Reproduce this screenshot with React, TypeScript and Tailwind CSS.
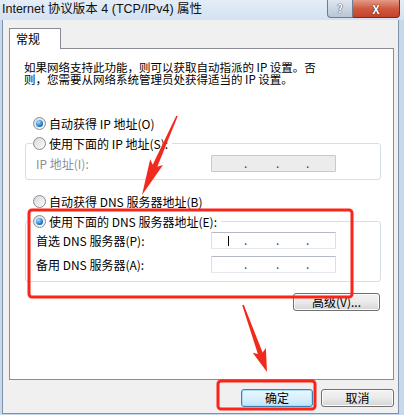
import React from 'react';

function Radio({ checked = false }: { checked?: boolean }) {
  return (
    <span className="w-[13px] h-[13px] rounded-full border border-[#8b8d90] bg-gradient-to-br from-[#d6d8db] to-[#fbfbfb] flex items-center justify-center shrink-0">
      {checked && (
        <span className="w-[7px] h-[7px] rounded-full bg-[radial-gradient(circle_at_35%_30%,#a8e2ff,#2a86d6_55%,#0d3d80)]" />
      )}
    </span>
  );
}

function IpBox({ disabled = false, cursor = false }: { disabled?: boolean; cursor?: boolean }) {
  return (
    <div
      className={
        'relative w-[125px] h-[17px] border rounded-[1px] ' +
        (disabled
          ? 'bg-[#ececec] border-[#c9c9c9]'
          : 'bg-white border-[#b5bbc4] border-b-[#e3e9ef] border-x-[#dbdfe6]')
      }
    >
      {cursor && <span className="absolute left-[16px] top-[3px] w-[1px] h-[10px] bg-black" />}
      <span className="absolute left-[32px] top-[1px] text-[12px] leading-[12px] text-[#444]">.</span>
      <span className="absolute left-[64px] top-[1px] text-[12px] leading-[12px] text-[#444]">.</span>
      <span className="absolute left-[94px] top-[1px] text-[12px] leading-[12px] text-[#444]">.</span>
    </div>
  );
}

function Button({ label, primary = false, w }: { label: string; primary?: boolean; w: string }) {
  return (
    <div
      className={
        w +
        ' h-[18px] rounded-[3px] border flex items-center justify-center text-[12px] leading-[12px] text-black bg-gradient-to-b ' +
        (primary
          ? 'border-[#3c7fb1] from-[#eaf6fd] via-[#d9f0fc] to-[#bee6fd] shadow-[inset_0_0_0_1px_#a8dcf8]'
          : 'border-[#707070] from-[#f2f2f2] via-[#ebebeb] to-[#d4d4d4] shadow-[inset_0_0_0_1px_#fbfbfb]')
      }
    >
      {label}
    </div>
  );
}

export default function App() {
  return (
    <div className="relative w-[404px] h-[415px] overflow-hidden font-['Noto_Sans_CJK_SC','Liberation_Sans',sans-serif] text-black">
      {/* Title bar */}
      <div className="h-[20px] flex items-start bg-gradient-to-b from-[#e4edf7] to-[#d3e1f1]">
        <span className="ml-[2px] mt-[1px] text-[12.5px] leading-[16px] font-['Liberation_Sans','Noto_Sans_CJK_SC',sans-serif] text-[#111]">
          Internet 协议版本 4 (TCP/IPv4) 属性
        </span>
        <div className="ml-auto mr-[4px] flex">
          <div className="w-[26px] h-[18px] border border-t-0 border-[#6d7c8f] rounded-bl-[4px] bg-gradient-to-b from-[#dfe6ef] to-[#b8c6d6] flex items-center justify-center text-[11px] leading-[11px] font-bold text-white [text-shadow:0_0_1px_#2b3a4e,0_0_1px_#2b3a4e]">
            ?
          </div>
          <div className="w-[47px] h-[18px] border border-l-0 border-t-0 border-[#7a2b1f] rounded-br-[4px] bg-gradient-to-b from-[#e29b88] via-[#cf5a40] to-[#c4412a] flex items-center justify-center text-[12px] leading-[12px] font-bold text-white [text-shadow:0_0_1px_#4a1208,0_0_1px_#4a1208]">
            X
          </div>
        </div>
      </div>

      {/* Window body */}
      <div className="h-[395px] bg-[#c6d8ec] pl-[2px] pr-[5px] pb-[1px]">
        <div className="h-[394px] bg-[#f0f0f0] border-l border-r border-b border-[#7f91a8] pl-[6px] pr-[4px] pt-[8px] flex flex-col">
          {/* Tab */}
          <div className="relative z-10 -mb-[1px] w-[52px] h-[21px] bg-white border border-b-0 border-[#898c95] pl-[6px] pt-[3px] text-[12px] leading-[13px]">
            常规
          </div>

          {/* Panel */}
          <div className="h-[332px] bg-white border border-[#898c95] flex flex-col text-[12px]">
            <div className="mt-[12px] ml-[14px] text-[11.5px] leading-[12px]">
              <div className="h-[12px]">如果网络支持此功能，则可以获取自动指派的 IP 设置。否</div>
              <div className="h-[12px]">则，您需要从网络系统管理员处获得适当的 IP 设置。</div>
            </div>

            <div className="mt-[32px] ml-[23px] h-[13px] flex items-center gap-[3px] leading-[12px]">
              <Radio checked />
              <span>自动获得 IP 地址(O)</span>
            </div>

            {/* Group 1 */}
            <div className="mt-[13px] ml-[15px] mr-[12px] border border-[#d5dfe5] rounded-[3px] pb-[7px] flex flex-col">
              <div className="-mt-[7px] ml-[7px] self-start h-[13px] flex items-center gap-[3px] bg-white pr-[4px] leading-[12px]">
                <Radio />
                <span>使用下面的 IP 地址(S):</span>
              </div>
              <div className="mt-[5px] flex items-center h-[17px]">
                <span className="pl-[10px] text-[#8f8f8f] leading-[12px]">IP 地址(I):</span>
                <div className="ml-auto mr-[44px]">
                  <IpBox disabled />
                </div>
              </div>
            </div>

            <div className="mt-[15px] ml-[23px] h-[13px] flex items-center gap-[3px] leading-[12px]">
              <Radio />
              <span>自动获得 DNS 服务器地址(B)</span>
            </div>

            {/* Group 2 */}
            <div className="mt-[13px] ml-[15px] mr-[12px] border border-[#d5dfe5] rounded-[3px] pb-[8px] flex flex-col">
              <div className="-mt-[7px] ml-[7px] self-start h-[13px] flex items-center gap-[3px] bg-white pr-[4px] leading-[12px]">
                <Radio checked />
                <span>使用下面的 DNS 服务器地址(E):</span>
              </div>
              <div className="mt-[4px] flex items-center h-[17px]">
                <span className="pl-[10px] leading-[12px]">首选 DNS 服务器(P):</span>
                <div className="ml-auto mr-[44px]">
                  <IpBox cursor />
                </div>
              </div>
              <div className="mt-[7px] flex items-center h-[17px]">
                <span className="pl-[10px] leading-[12px]">备用 DNS 服务器(A):</span>
                <div className="ml-auto mr-[44px]">
                  <IpBox />
                </div>
              </div>
            </div>

            <div className="mt-[11px] self-end mr-[13px]">
              <Button label="高级(V)..." w="w-[87px]" />
            </div>
          </div>

          {/* Dialog buttons */}
          <div className="mt-[9px] flex justify-end gap-[8px]">
            <Button label="确定" primary w="w-[72px]" />
            <Button label="取消" w="w-[73px]" />
          </div>
        </div>
      </div>

      {/* Red annotations */}
      <svg className="absolute inset-0 pointer-events-none" width="404" height="415" viewBox="0 0 404 415">
        <rect x="29" y="210" width="323" height="87" rx="3" fill="none" stroke="#fa2419" strokeWidth="3" />
        <rect x="218" y="381" width="97" height="28" rx="3" fill="none" stroke="#fa2419" strokeWidth="3" />
        <polygon
          fill="#f22a1d"
          points="177.7,116.3 157.3,166.8 163,165 142,195 150.2,159.3 152.7,164.8 176.3,115.7"
        />
        <polygon
          fill="#f22a1d"
          points="243.8,304.7 262.6,352.4 265.9,348 267,372 252.7,352.8 257.9,354 242.2,305.3"
        />
      </svg>
    </div>
  );
}
